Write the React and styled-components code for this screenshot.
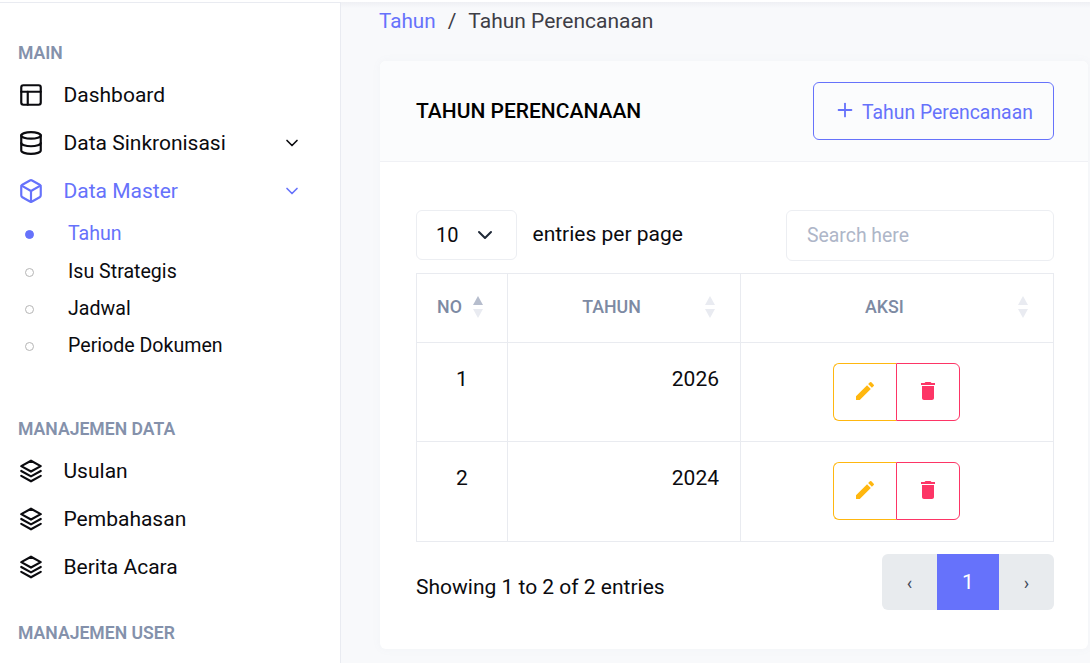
import React from "react";
import styled, { createGlobalStyle } from "styled-components";
import { Box, ChevronDown, Database, PanelsTopLeft, Plus } from "lucide-react";
import { MdDelete, MdEdit } from "react-icons/md";

const GlobalStyle = createGlobalStyle`
  html, body {
    margin: 0;
    padding: 0;
    height: 100%;
    overflow: hidden;
  }
  body {
    font-family: Roboto, "Liberation Sans", sans-serif;
    background: #f8f9fb;
    color: #0b0b0f;
  }
`;

const Page = styled.div`
  display: flex;
  flex-direction: column;
  width: 1090px;
  height: 663px;
  overflow: hidden;
`;

const TopStrip = styled.div`
  flex: none;
  height: 2px;
  background: #fff;
`;

const Shell = styled.div`
  display: flex;
  flex: 1;
  min-height: 0;
`;

const Sidebar = styled.aside`
  flex: none;
  width: 341px;
  box-sizing: border-box;
  background: #fff;
  border-top: 1px solid #e9ebf1;
  border-right: 1px solid #e9ebf1;
  padding: 40px 0 0 18px;
  overflow: hidden;
`;

const SectionLabel = styled.div`
  font-size: 17.6px;
  line-height: 20px;
  font-weight: 600;
  color: #8491ab;
  margin-top: ${(p) => p.$top || 0}px;
  margin-bottom: 8px;
`;

const NavItem = styled.div`
  display: flex;
  align-items: center;
  height: 48px;
  font-size: 21px;
  color: ${(p) => (p.$active ? "#6672fb" : "#0b0b0f")};
`;

const NavIcon = styled.span`
  display: flex;
  width: 45.5px;
  svg {
    display: block;
  }
`;

const NavArrow = styled.span`
  display: flex;
  margin-left: auto;
  margin-right: 38px;
`;

const SubList = styled.div`
  display: flex;
  flex-direction: column;
`;

const SubItem = styled.div`
  display: flex;
  align-items: center;
  height: 37.4px;
  font-size: 19.6px;
  color: ${(p) => (p.$active ? "#6672fb" : "#0b0b0f")};
`;

const Dot = styled.span`
  flex: none;
  box-sizing: border-box;
  width: 9px;
  height: 9px;
  margin: 2px 34px 0 7px;
  border-radius: 50%;
  border: 1px solid ${(p) => (p.$active ? "#6672fb" : "#b5b5b5")};
  background: ${(p) => (p.$active ? "#6672fb" : "transparent")};
`;

const Main = styled.main`
  flex: 1;
  min-width: 0;
  padding: 0 2px 0 39px;
  background: linear-gradient(#eff0f4, #f8f9fb 6px);
`;

const Crumbs = styled.nav`
  display: flex;
  align-items: center;
  height: 59px;
  box-sizing: border-box;
  margin-left: -1px;
  padding-bottom: 22px;
  font-size: 21px;
  color: #3e3e46;
`;

const CrumbLink = styled.span`
  color: #6672fb;
  font-size: 20.7px;
`;

const CrumbSep = styled.span`
  margin: 0 12px;
`;

const Card = styled.section`
  background: #fff;
  border-radius: 6px;
  box-shadow: 0 0 10px rgba(120, 130, 160, 0.05);
  height: 588px;
  overflow: hidden;
`;

const CardHead = styled.header`
  display: flex;
  align-items: center;
  justify-content: space-between;
  height: 101px;
  box-sizing: border-box;
  padding: 0 34px 0 36px;
  background: #fbfcfd;
  border-bottom: 1px solid #f0f1f5;
`;

const CardTitle = styled.h2`
  margin: 0;
  font-size: 21px;
  font-weight: 500;
  color: #000;
`;

const AddButton = styled.button`
  display: flex;
  align-items: center;
  gap: 6px;
  width: 241px;
  height: 58px;
  box-sizing: border-box;
  padding: 0 0 0 20px;
  font: inherit;
  font-size: 19.4px;
  color: #6672fb;
  background: transparent;
  border: 1px solid #6672fb;
  border-radius: 6px;
  svg {
    margin-top: -3px;
  }
`;

const AddLabel = styled.span`
  margin-top: 3px;
`;

const CardBody = styled.div`
  padding: 48px 34px 0 36px;
`;

const Controls = styled.div`
  display: flex;
  align-items: flex-start;
  margin-bottom: 12px;
`;

const PerPage = styled.div`
  display: flex;
  align-items: center;
  justify-content: space-between;
  width: 101px;
  height: 50px;
  box-sizing: border-box;
  padding: 0 19px;
  font-size: 20px;
  border: 1px solid #eceef2;
  border-radius: 6px;
`;

const PerPageText = styled.span`
  margin-left: 15.5px;
  font-size: 21px;
  line-height: 48px;
`;

const Search = styled.div`
  width: 268px;
  height: 51px;
  box-sizing: border-box;
  margin-left: auto;
  padding-left: 20px;
  font-size: 19.4px;
  line-height: 49px;
  color: #aeb6c8;
  border: 1px solid #eceef2;
  border-radius: 6px;
`;

const Table = styled.table`
  width: 637px;
  border-collapse: collapse;
  table-layout: fixed;
  font-size: 21px;
  border: 1px solid #e9ebf0;
  td, th {
    border: 1px solid #e9ebf0;
    padding: 0;
    box-sizing: border-box;
  }
`;

const HeadCell = styled.th`
  position: relative;
  height: 69px;
  font-size: 17.8px;
  font-weight: 500;
  color: #7d8aa3;
  text-align: center;
  width: ${(p) => p.$w}px;
  padding-right: ${(p) => p.$pr}px !important;
  padding-bottom: 3px !important;
`;

const SortMark = styled.span`
  position: absolute;
  top: 22px;
  right: ${(p) => p.$right}px;
  display: flex;
  flex-direction: column;
  gap: 4px;
`;

const Caret = styled.span`
  display: block;
  width: 0;
  height: 0;
  border-left: 5px solid transparent;
  border-right: 5px solid transparent;
  ${(p) => (p.$down ? "border-top" : "border-bottom")}: 9px solid ${(p) => (p.$on ? "#b6bdcd" : "#e9ebf1")};
`;

const Cell = styled.td`
  height: ${(p) => p.$h}px;
  vertical-align: top;
  padding-top: 24px !important;
  line-height: 24px;
  text-align: ${(p) => p.$align || "center"};
  padding-right: ${(p) => p.$pr || 0}px !important;
`;

const ActionCell = styled.td`
  vertical-align: top;
  padding-top: 20px !important;
`;

const Actions = styled.div`
  display: flex;
  width: 127px;
  height: 58px;
  margin-left: 92px;
`;

const ActionButton = styled.button`
  display: flex;
  align-items: center;
  justify-content: center;
  width: ${(p) => p.$w}px;
  height: 58px;
  padding: 0 0 2px;
  font-size: 24px;
  background: #fff;
  color: ${(p) => p.$color};
  border: 1px solid ${(p) => p.$color};
  border-radius: ${(p) => p.$radius};
  ${(p) => (p.$flat ? "border-right: 0;" : "")}
`;

const Foot = styled.div`
  display: flex;
  align-items: center;
  justify-content: space-between;
  margin-top: 12px;
  font-size: 21px;
`;

const FootText = styled.span`
  padding-top: 10px;
`;

const Pager = styled.div`
  display: flex;
  height: 56px;
  border-radius: 6px;
  overflow: hidden;
  background: #e8ebee;
`;

const PageBtn = styled.span`
  display: flex;
  align-items: center;
  justify-content: center;
  width: ${(p) => p.$w}px;
  font-size: ${(p) => (p.$active ? 21 : 18)}px;
  color: ${(p) => (p.$active ? "#fff" : "#3f4a5a")};
  background: ${(p) => (p.$active ? "#6672fb" : "transparent")};
`;

const LayersIcon = () => (
  <svg width="26" height="26" viewBox="0 0 24 24" fill="none" stroke="currentColor" strokeWidth="2" strokeLinejoin="round" strokeLinecap="round">
    <path d="M12 2.5 3 7.5l9 5 9-5z" />
    <path d="m3 12 9 5 9-5" />
    <path d="m3 16.5 9 5 9-5" />
  </svg>
);

const Sort = ({ right, on }) => (
  <SortMark $right={right}>
    <Caret $on={on} />
    <Caret $down />
  </SortMark>
);

const rows = [
  { no: 1, year: 2026, h: 99 },
  { no: 2, year: 2024, h: 100 },
];

export default function App() {
  return (
    <Page>
      <GlobalStyle />
      <TopStrip />
      <Shell>
        <Sidebar>
          <SectionLabel>MAIN</SectionLabel>
          <NavItem>
            <NavIcon><PanelsTopLeft size={26} strokeWidth={2} /></NavIcon>
            Dashboard
          </NavItem>
          <NavItem>
            <NavIcon><Database size={26} strokeWidth={2} /></NavIcon>
            Data Sinkronisasi
            <NavArrow><ChevronDown size={20} /></NavArrow>
          </NavItem>
          <NavItem $active>
            <NavIcon><Box size={26} strokeWidth={2} /></NavIcon>
            Data Master
            <NavArrow><ChevronDown size={20} /></NavArrow>
          </NavItem>
          <SubList>
            <SubItem $active><Dot $active />Tahun</SubItem>
            <SubItem><Dot />Isu Strategis</SubItem>
            <SubItem><Dot />Jadwal</SubItem>
            <SubItem><Dot />Periode Dokumen</SubItem>
          </SubList>
          <SectionLabel $top={54}>MANAJEMEN DATA</SectionLabel>
          <NavItem><NavIcon><LayersIcon /></NavIcon>Usulan</NavItem>
          <NavItem><NavIcon><LayersIcon /></NavIcon>Pembahasan</NavItem>
          <NavItem><NavIcon><LayersIcon /></NavIcon>Berita Acara</NavItem>
          <SectionLabel $top={32}>MANAJEMEN USER</SectionLabel>
        </Sidebar>
        <Main>
          <Crumbs>
            <CrumbLink>Tahun</CrumbLink>
            <CrumbSep>/</CrumbSep>
            Tahun Perencanaan
          </Crumbs>
          <Card>
            <CardHead>
              <CardTitle>TAHUN PERENCANAAN</CardTitle>
              <AddButton><Plus size={22} /><AddLabel>Tahun Perencanaan</AddLabel></AddButton>
            </CardHead>
            <CardBody>
              <Controls>
                <PerPage>10<ChevronDown size={24} color="#1f2937" /></PerPage>
                <PerPageText>entries per page</PerPageText>
                <Search>Search here</Search>
              </Controls>
              <Table>
                <thead>
                  <tr>
                    <HeadCell $w={91} $pr={25}>NO<Sort right={24} on /></HeadCell>
                    <HeadCell $w={233} $pr={25}>TAHUN<Sort right={25} /></HeadCell>
                    <HeadCell $w={313} $pr={25}>AKSI<Sort right={25} /></HeadCell>
                  </tr>
                </thead>
                <tbody>
                  {rows.map((r) => (
                    <tr key={r.no}>
                      <Cell $h={r.h}>{r.no}</Cell>
                      <Cell $h={r.h} $align="right" $pr={21}>{r.year}</Cell>
                      <ActionCell>
                        <Actions>
                          <ActionButton $w={63} $color="#ffb70f" $radius="6px 0 0 6px" $flat><MdEdit /></ActionButton>
                          <ActionButton $w={64} $color="#fd3566" $radius="0 6px 6px 0"><MdDelete /></ActionButton>
                        </Actions>
                      </ActionCell>
                    </tr>
                  ))}
                </tbody>
              </Table>
              <Foot>
                <FootText>Showing 1 to 2 of 2 entries</FootText>
                <Pager>
                  <PageBtn $w={55}>‹</PageBtn>
                  <PageBtn $w={62} $active>1</PageBtn>
                  <PageBtn $w={55}>›</PageBtn>
                </Pager>
              </Foot>
            </CardBody>
          </Card>
        </Main>
      </Shell>
    </Page>
  );
}
